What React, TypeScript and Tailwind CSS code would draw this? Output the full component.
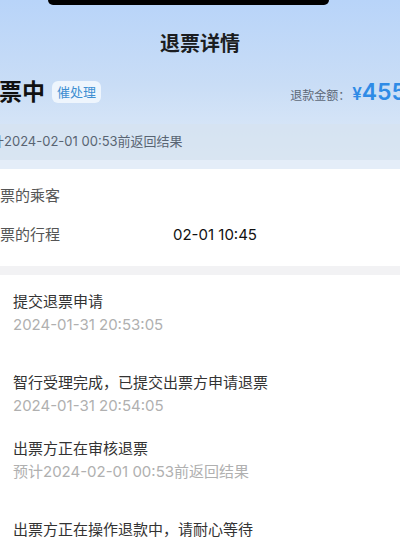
export default function App() {
  const steps = [
    { title: '提交退票申请', sub: '2024-01-31 20:53:05', gap: 'pt-[16px]' },
    { title: '智行受理完成，已提交出票方申请退票', sub: '2024-01-31 20:54:05', gap: 'pt-[37px]' },
    { title: '出票方正在审核退票', sub: '预计2024-02-01 00:53前返回结果', gap: 'pt-[22px]' },
    { title: '出票方正在操作退款中，请耐心等待', sub: '', gap: 'pt-[37px]' },
  ]

  return (
    <div
      className="w-[400px] h-[551px] overflow-hidden bg-white"
      style={{ fontFamily: 'Inter, "Noto Sans CJK SC", sans-serif' }}
    >
      <div className="bg-gradient-to-b from-[#b8d4f9] via-[#c9ddf6] to-[#e2ecf8]">
        <div className="ml-[48px] w-[281px] h-[5px] bg-black rounded-b-[10px]" />

        <h1 className="mt-[25px] h-[28px] leading-[28px] text-center text-[20px] font-semibold text-[#1b1d21]">
          退票详情
        </h1>

        <div className="mt-[18px] h-[32px] flex items-center whitespace-nowrap">
          <div className="-ml-[24px] flex items-center shrink-0">
            <span className="text-[23px] font-bold text-[#111] leading-[32px]">退票中</span>
            <span className="ml-[7px] px-[5px] h-[22px] leading-[22px] rounded-[6px] bg-[#eef5fd] text-[13px] text-[#3f8fd2]">
              催处理
            </span>
          </div>
          <div className="ml-auto -mr-[6px] flex items-baseline shrink-0">
            <span className="text-[12px] text-[#5d6877]">退款金额：</span>
            <span className="ml-[2px] text-[17px] font-semibold text-[#2f8be6]">¥</span>
            <span className="text-[23px] font-semibold text-[#2f8be6] leading-[32px]">455</span>
          </div>
        </div>

        <div className="mt-[16px] h-[36px] flex items-center bg-[#d6e2f0]/70 whitespace-nowrap">
          <span className="-ml-[22px] text-[13px] text-[#596473]">预计2024-02-01 00:53前返回结果</span>
        </div>
        <div className="h-[9px] bg-[#e4edf8]" />
      </div>

      <div className="bg-white pt-[8px] pb-[11px] text-[15px] whitespace-nowrap">
        <div className="h-[39px] flex items-center">
          <span className="-ml-[15px] text-[#555]">退票的乘客</span>
        </div>
        <div className="h-[39px] flex items-center">
          <span className="-ml-[15px] w-[188px] shrink-0 text-[#555]">退票的行程</span>
          <span className="text-[#111]">02-01 10:45</span>
        </div>
      </div>

      <div className="h-[9px] bg-[#f2f2f4]" />

      <div className="bg-white pl-[13px]">
        {steps.map((s) => (
          <div key={s.title} className={s.gap}>
            <div className="text-[15px] leading-[22px] text-[#333]">{s.title}</div>
            {s.sub && (
              <div className="mt-[2px] text-[15px] leading-[20px] text-[#b0b0b0]">{s.sub}</div>
            )}
          </div>
        ))}
      </div>
    </div>
  )
}
